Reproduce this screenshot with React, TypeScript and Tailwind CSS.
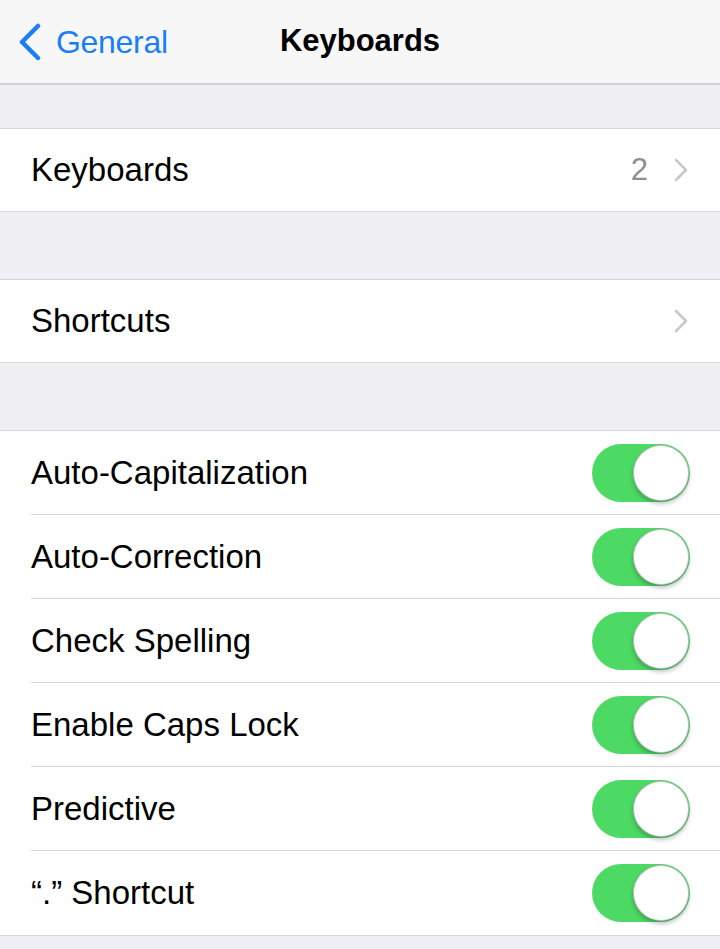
import React from "react";

const toggles = [
  "Auto-Capitalization",
  "Auto-Correction",
  "Check Spelling",
  "Enable Caps Lock",
  "Predictive",
  "\u201C.\u201D Shortcut",
];

function Chevron() {
  return (
    <svg width="14" height="24" viewBox="0 0 14 24" className="shrink-0">
      <path d="M2 2 L12 12 L2 22" fill="none" stroke="#c7c7cc" strokeWidth="2.6" strokeLinecap="round" strokeLinejoin="round" />
    </svg>
  );
}

function Toggle() {
  return (
    <div className="relative w-[98px] h-[58px] rounded-full bg-[#4cd964]">
      <div className="absolute right-[1px] top-[1px] w-[56px] h-[56px] rounded-full bg-white border border-[#9a9a9a]/60 shadow-[0_3px_4px_rgba(0,0,0,0.25)]" />
    </div>
  );
}

function Gap({ h }: { h: string }) {
  return <div className={`${h} bg-[#efeff4]`} />;
}

export default function App() {
  return (
    <div
      className="w-[720px] h-[949px] bg-[#efeff4] overflow-hidden text-black"
      style={{ fontFamily: '"Liberation Sans", Arial, sans-serif' }}
    >
      {/* Nav bar */}
      <div className="relative h-[85px] bg-[#f7f7f8] border-b-2 border-[#d2d2d6] flex items-center">
        <div className="flex items-center pl-[18px] gap-[14px] text-[#1a7ef5]">
          <svg width="24" height="38" viewBox="0 0 24 38">
            <path d="M20 3 L4 19 L20 35" fill="none" stroke="#1a7ef5" strokeWidth="4.5" strokeLinecap="round" strokeLinejoin="round" />
          </svg>
          <span className="text-[32px] tracking-[-0.3px]">General</span>
        </div>
        <div className="absolute inset-x-0 text-center text-[31px] font-bold pointer-events-none">
          Keyboards
        </div>
      </div>

      <Gap h="h-[43px]" />

      <div className="bg-white border-y border-[#d6d6da]">
        <div className="h-[82px] flex items-center pl-[31px] pr-[32px]">
          <span className="flex-1 text-[33px]">Keyboards</span>
          <span className="text-[31px] text-[#8e8e93] mr-[26px]">2</span>
          <Chevron />
        </div>
      </div>

      <Gap h="h-[67px]" />

      <div className="bg-white border-y border-[#d6d6da]">
        <div className="h-[82px] flex items-center pl-[31px] pr-[32px]">
          <span className="flex-1 text-[33px]">Shortcuts</span>
          <Chevron />
        </div>
      </div>

      <Gap h="h-[67px]" />

      <div className="bg-white border-y border-[#d6d6da]">
        {toggles.map((t, i) => (
          <div key={t} className="pl-[31px]">
            <div
              className={`h-[84px] flex items-center pr-[30px] ${
                i < toggles.length - 1 ? "border-b border-[#d6d6da]" : ""
              }`}
            >
              <span className="flex-1 text-[33px]">{t}</span>
              <Toggle />
            </div>
          </div>
        ))}
      </div>
    </div>
  );
}
